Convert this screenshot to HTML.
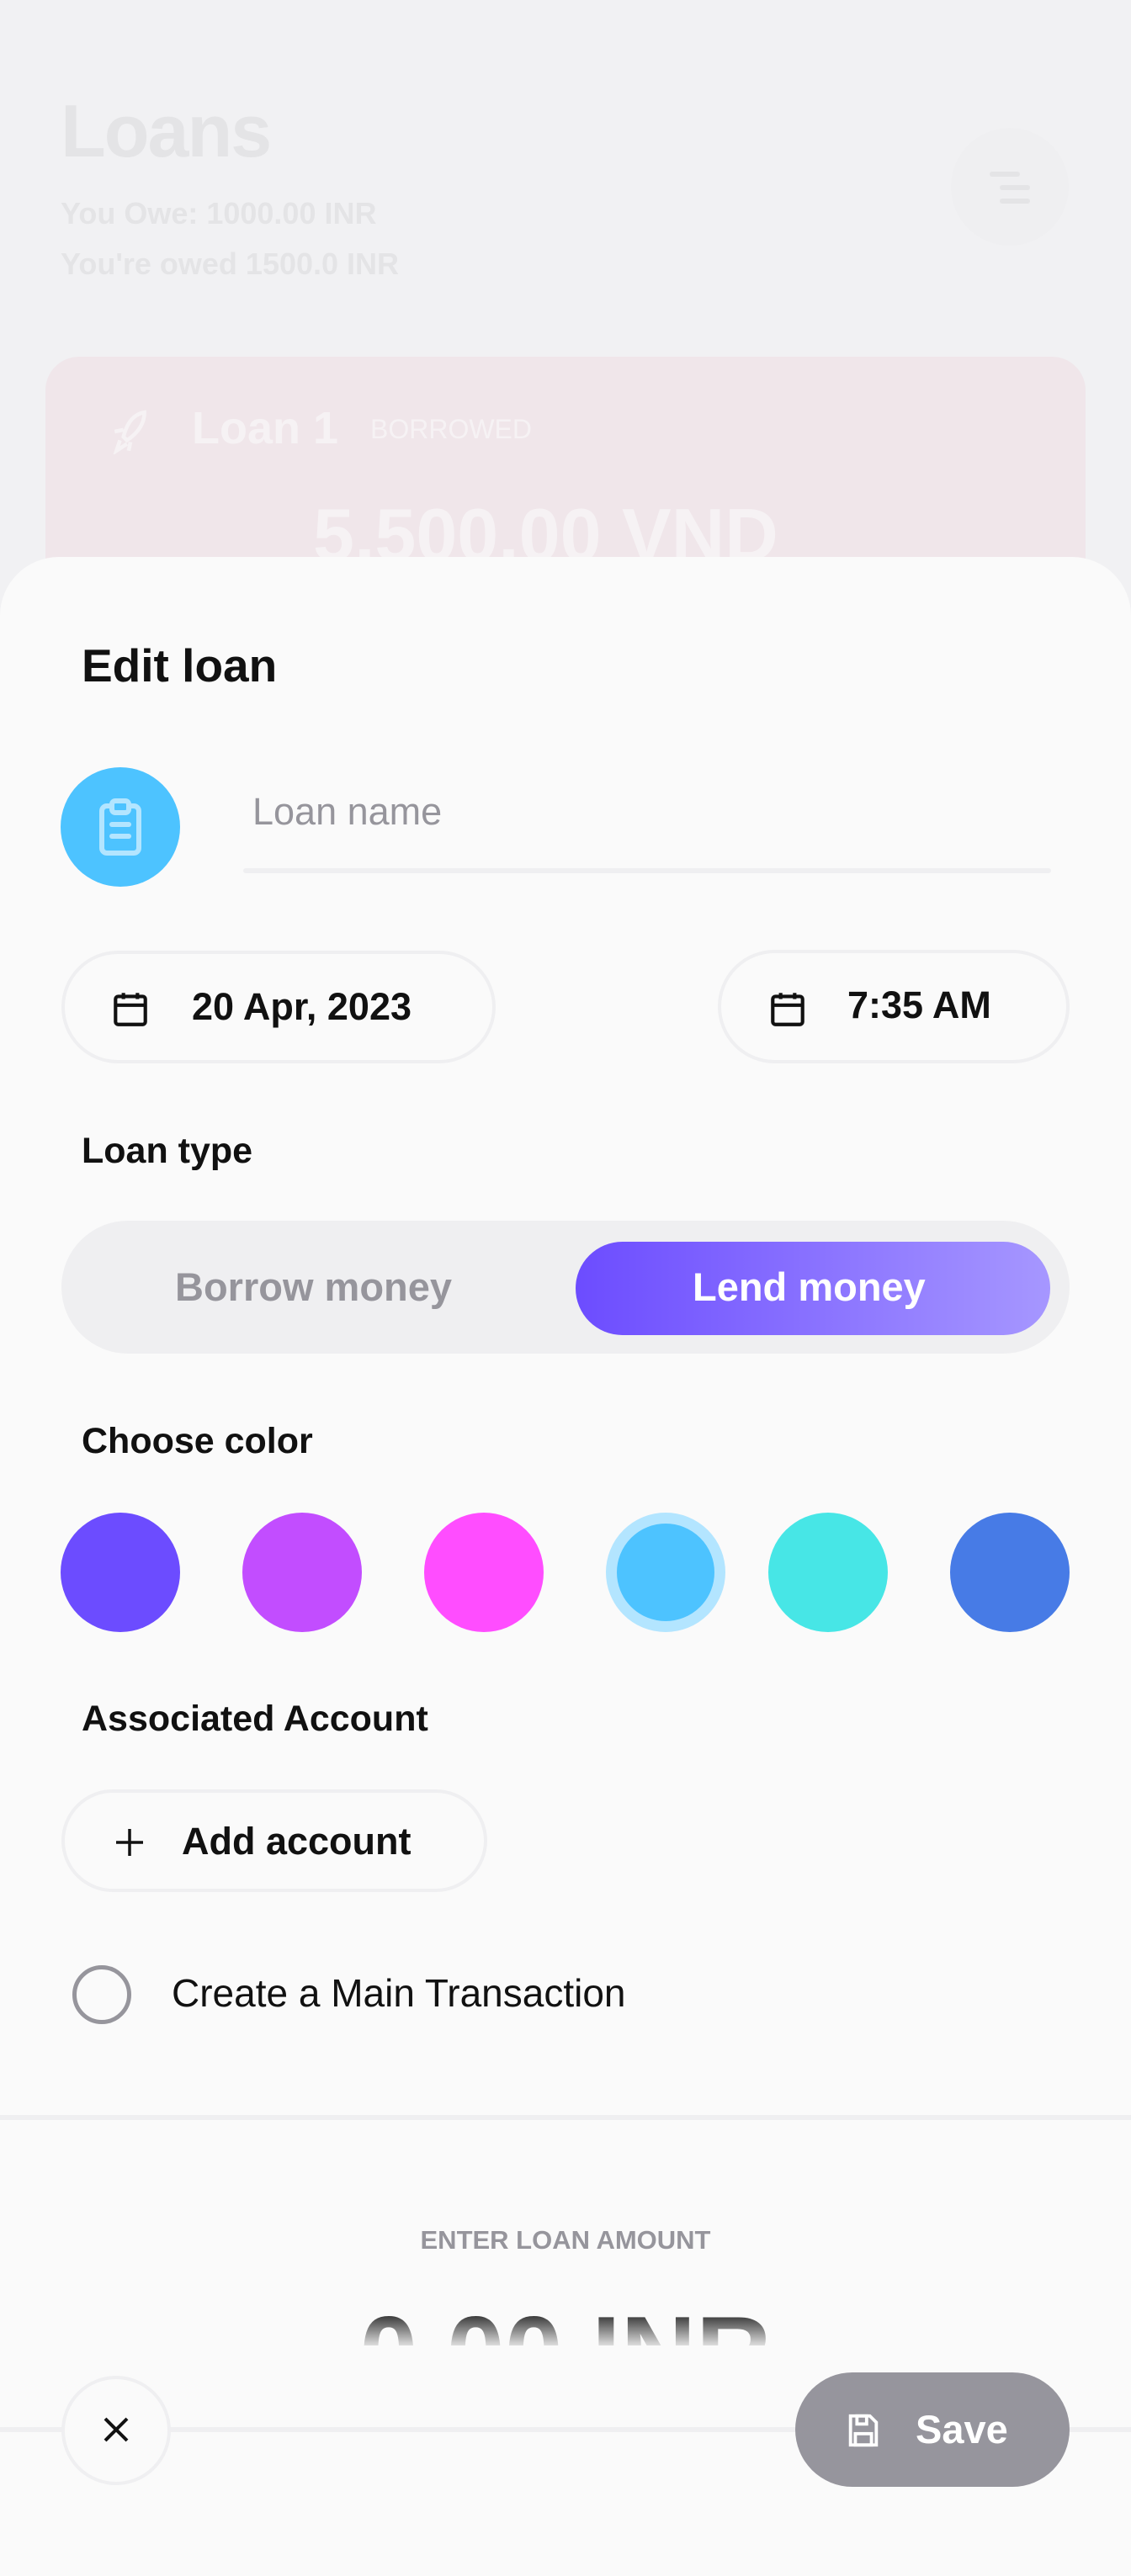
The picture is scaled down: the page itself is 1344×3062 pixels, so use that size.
<!DOCTYPE html>
<html><head><meta charset="utf-8">
<style>
*{margin:0;padding:0;box-sizing:border-box}
body{width:1344px;height:2992px;background:#f1f1f3;position:relative;overflow:hidden;font-family:"Liberation Sans",sans-serif}
.a{position:absolute}
.t{position:absolute;white-space:nowrap;line-height:1}
.b{font-weight:bold}
.pill{position:absolute;border:4px solid #efeff1;border-radius:80px;background:#fafafa}
.dot{position:absolute;width:142px;height:142px;border-radius:50%}
</style></head><body>
<div class="t b" style="left:72px;top:112px;font-size:88px;color:#e4e4e6;letter-spacing:-2px">Loans</div>
<div class="t b" style="left:72px;top:236px;font-size:36px;color:#e4e4e6">You Owe: 1000.00 INR</div>
<div class="t b" style="left:72px;top:296px;font-size:36px;color:#e4e4e6">You're owed 1500.0 INR</div>
<div class="a" style="left:1130px;top:152px;width:140px;height:140px;border-radius:50%;background:#efeff1"></div>
<div class="a" style="left:1176px;top:204px;width:36px;height:6px;border-radius:3px;background:#e4e4e6"></div>
<div class="a" style="left:1188px;top:220px;width:36px;height:6px;border-radius:3px;background:#e4e4e6"></div>
<div class="a" style="left:1188px;top:236px;width:36px;height:6px;border-radius:3px;background:#e4e4e6"></div>
<div class="a" style="left:54px;top:424px;width:1236px;height:400px;border-radius:40px;background:#f0e6ea"></div>
<svg class="a" style="left:130px;top:486px" width="50" height="54" viewBox="0 0 24 26" fill="none" stroke="#f6f2f4" stroke-width="2.2"><path d="M6 18 L4 24 L10 20 M8 16 C10 8 14 3 20 2 C20 9 16 14 10 18 Z M8 12 L3 13 M12 19 L11 24"/></svg>
<div class="t b" style="left:228px;top:482px;font-size:54px;color:#f6f2f4">Loan 1</div>
<div class="t" style="left:440px;top:494px;font-size:32px;color:#f6f2f4">BORROWED</div>
<div class="t b" style="left:372px;top:592px;font-size:88px;color:#f6f2f4">5,500.00 VND</div>

<div class="a" style="left:0;top:662px;width:1344px;height:2400px;background:#fafafa;border-radius:70px 70px 0 0"></div>
<div class="t b" style="left:97px;top:764px;font-size:55px;color:#111">Edit loan</div>

<div class="a" style="left:72px;top:912px;width:142px;height:142px;border-radius:50%;background:#4dc3ff"></div>
<svg class="a" style="left:113px;top:948px" width="60" height="70" viewBox="0 0 60 70"><rect x="8" y="10" width="44" height="56" rx="6" fill="none" stroke="#b3e5ff" stroke-width="6"/><rect x="20" y="4" width="20" height="14" rx="4" fill="#4dc3ff" stroke="#b3e5ff" stroke-width="6"/><line x1="20" y1="32" x2="40" y2="32" stroke="#b3e5ff" stroke-width="6" stroke-linecap="round"/><line x1="20" y1="46" x2="40" y2="46" stroke="#b3e5ff" stroke-width="6" stroke-linecap="round"/></svg>
<div class="t" style="left:300px;top:942px;font-size:45px;color:#96959c">Loan name</div>
<div class="a" style="left:289px;top:1032px;width:960px;height:6px;border-radius:3px;background:#efeff1"></div>

<div class="pill" style="left:73px;top:1130px;width:516px;height:134px"></div>
<div class="pill" style="left:853px;top:1129px;width:418px;height:135px"></div>
<svg class="a" style="left:130px;top:1174px" width="50" height="50" viewBox="0 0 24 24" fill="none" stroke="#111" stroke-width="2"><rect x="3.5" y="5" width="17" height="16" rx="1.5"/><line x1="3.5" y1="10" x2="20.5" y2="10"/><line x1="8" y1="3" x2="8" y2="6.5"/><line x1="16" y1="3" x2="16" y2="6.5"/></svg>
<svg class="a" style="left:911px;top:1174px" width="50" height="50" viewBox="0 0 24 24" fill="none" stroke="#111" stroke-width="2"><rect x="3.5" y="5" width="17" height="16" rx="1.5"/><line x1="3.5" y1="10" x2="20.5" y2="10"/><line x1="8" y1="3" x2="8" y2="6.5"/><line x1="16" y1="3" x2="16" y2="6.5"/></svg>
<div class="t b" style="left:228px;top:1174px;font-size:45px;color:#111">20 Apr, 2023</div>
<div class="t b" style="left:1007px;top:1172px;font-size:45px;color:#111">7:35 AM</div>

<div class="t b" style="left:97px;top:1347px;font-size:43px;color:#111">Loan type</div>
<div class="a" style="left:73px;top:1451px;width:1198px;height:158px;border-radius:79px;background:#efeff1"></div>
<div class="t b" style="left:208px;top:1506px;font-size:47px;color:#96959c">Borrow money</div>
<div class="a" style="left:684px;top:1476px;width:564px;height:111px;border-radius:56px;background:linear-gradient(90deg,#6c4cff,#a697ff)"></div>
<div class="t b" style="left:823px;top:1506px;font-size:47px;color:#fff">Lend money</div>

<div class="t b" style="left:97px;top:1692px;font-size:43px;color:#111">Choose color</div>
<div class="dot" style="left:72px;top:1798px;background:#6c4cff"></div>
<div class="dot" style="left:288px;top:1798px;background:#c24dff"></div>
<div class="dot" style="left:504px;top:1798px;background:#ff4dff"></div>
<div class="dot" style="left:720px;top:1798px;background:#4dc3ff;border:13px solid #b3e5ff"></div>
<div class="dot" style="left:913px;top:1798px;background:#47e6e6"></div>
<div class="dot" style="left:1129px;top:1798px;background:#477be6"></div>

<div class="t b" style="left:97px;top:2022px;font-size:43px;color:#111">Associated Account</div>
<div class="pill" style="left:73px;top:2127px;width:506px;height:122px"></div>
<svg class="a" style="left:134px;top:2170px" width="40" height="40" viewBox="0 0 40 40" stroke="#111" stroke-width="3.5"><line x1="20" y1="4" x2="20" y2="36"/><line x1="4" y1="20" x2="36" y2="20"/></svg>
<div class="t b" style="left:216px;top:2166px;font-size:45px;color:#111">Add account</div>

<div class="a" style="left:86px;top:2336px;width:70px;height:70px;border-radius:50%;border:5px solid #96959c"></div>
<div class="t" style="left:204px;top:2346px;font-size:46px;color:#111">Create a Main Transaction</div>

<div class="a" style="left:0;top:2514px;width:1344px;height:6px;background:#efeff1"></div>
<div class="t b" style="left:0;width:1344px;text-align:center;top:2647px;font-size:31px;color:#96959c">ENTER LOAN AMOUNT</div>
<div class="a" style="left:0;top:2730px;width:1344px;height:58px;overflow:hidden">
<div class="t b" style="left:0;width:1344px;text-align:center;top:6px;font-size:124px;background:linear-gradient(#111 0,#111 8px,rgba(17,17,17,0) 58px);-webkit-background-clip:text;background-clip:text;color:transparent">0.00 INR</div></div>

<div class="a" style="left:0;top:2885px;width:1344px;height:6px;background:#efeff1"></div>
<div class="a" style="left:73px;top:2824px;width:130px;height:130px;border-radius:50%;background:#fafafa;border:4px solid #efeff1"></div>
<svg class="a" style="left:121px;top:2871px" width="34" height="34" viewBox="0 0 34 34" stroke="#111" stroke-width="4"><line x1="4" y1="4" x2="30" y2="30"/><line x1="30" y1="4" x2="4" y2="30"/></svg>
<div class="a" style="left:945px;top:2820px;width:326px;height:136px;border-radius:68px;background:#96959d"></div>
<svg class="a" style="left:1003px;top:2864px" width="46" height="50" viewBox="0 0 24 24" fill="none" stroke="#fff" stroke-width="2"><path d="M4 3h12l4 4v14H4z"/><rect x="8" y="3" width="6" height="5"/><rect x="7" y="14" width="10" height="7"/></svg>
<div class="t b" style="left:1088px;top:2864px;font-size:47px;color:#fff">Save</div>
</body></html>
